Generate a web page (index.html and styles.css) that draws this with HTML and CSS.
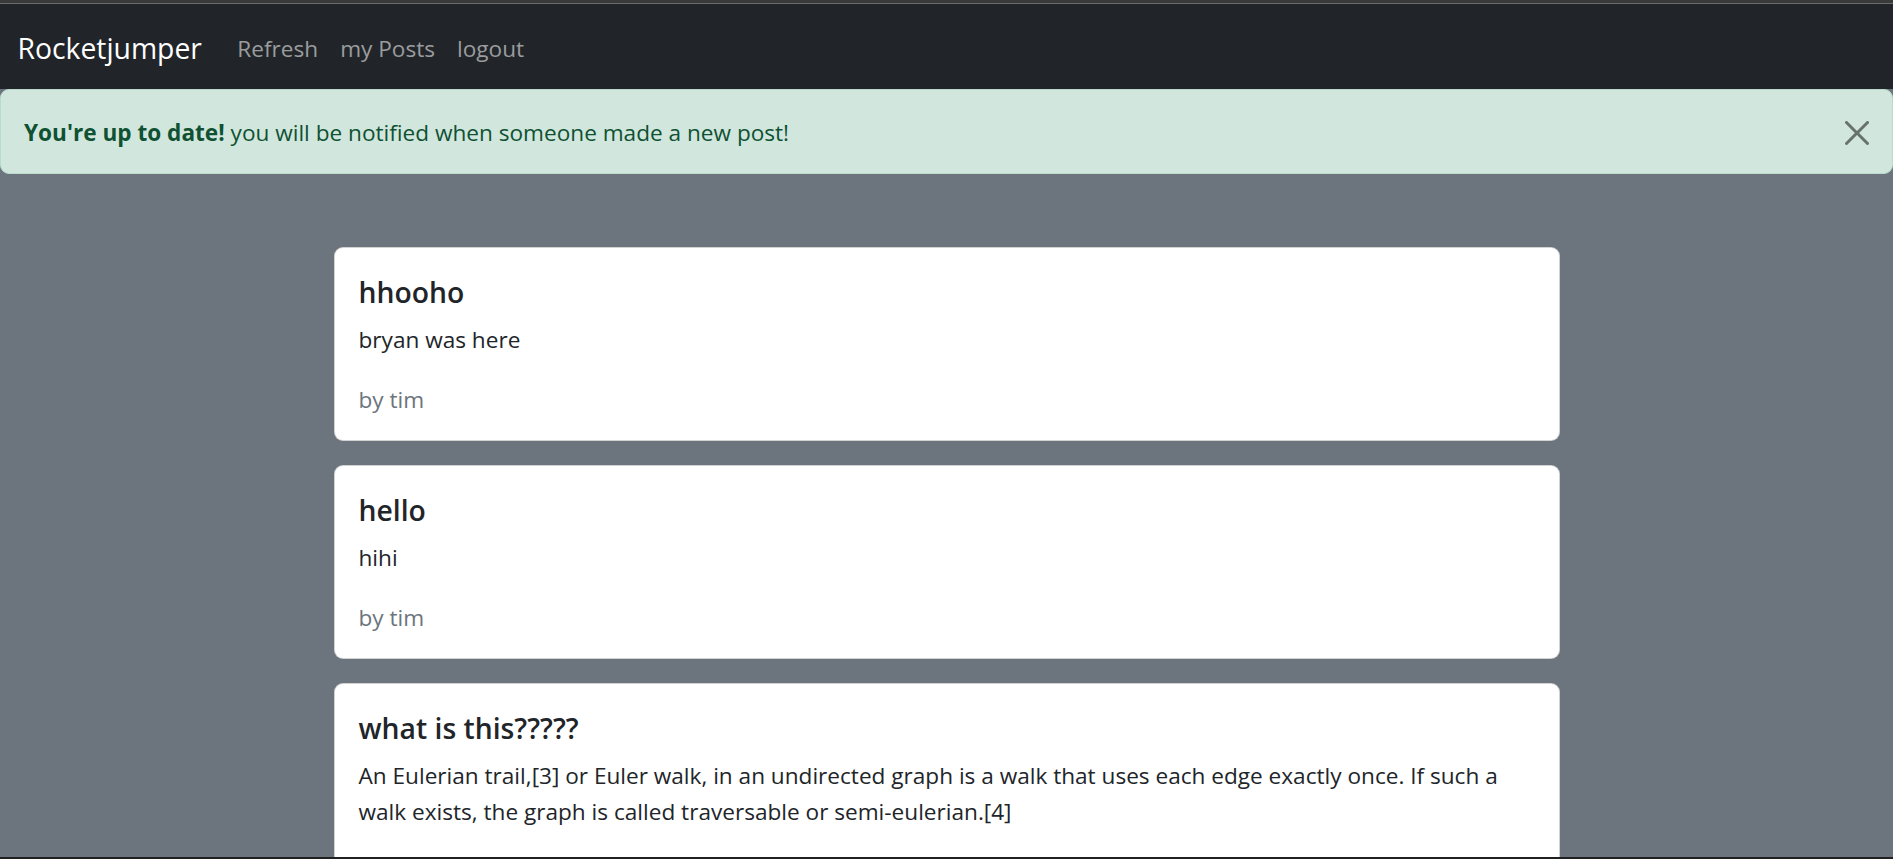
FILE: index.html
```html
<!DOCTYPE html>
<html lang="en">
<head>
<meta charset="utf-8">
<title>Rocketjumper</title>
<link rel="stylesheet" href="styles.css">
</head>
<body>
<div class="frame-top"></div>
<nav class="navbar">
  <a class="brand" href="#">Rocketjumper</a>
  <ul class="nav">
    <li><a class="nav-link" href="#">Refresh</a></li>
    <li><a class="nav-link" href="#">my Posts</a></li>
    <li><a class="nav-link" href="#">logout</a></li>
  </ul>
</nav>
<div class="alert">
  <span class="alert-text"><strong>You're up to date!</strong> you will be notified when someone made a new post!</span>
  <button class="btn-close" type="button" aria-label="Close">
    <svg viewBox="0 0 16 16" width="24" height="24"><path d="M.293.293a1 1 0 0 1 1.414 0L8 6.586 14.293.293a1 1 0 1 1 1.414 1.414L9.414 8l6.293 6.293a1 1 0 0 1-1.414 1.414L8 9.414l-6.293 6.293a1 1 0 0 1-1.414-1.414L6.586 8 .293 1.707a1 1 0 0 1 0-1.414z"/></svg>
  </button>
</div>
<main class="posts">
  <div class="card">
    <h5 class="card-title">hhooho</h5>
    <p class="card-text">bryan was here</p>
    <p class="author">by tim</p>
  </div>
  <div class="card">
    <h5 class="card-title">hello</h5>
    <p class="card-text">hihi</p>
    <p class="author">by tim</p>
  </div>
  <div class="card">
    <h5 class="card-title">what is this?????</h5>
    <p class="card-text">An Eulerian trail,[3] or Euler walk, in an undirected graph is a walk that uses each edge exactly once. If such a walk exists, the graph is called traversable or semi-eulerian.[4]</p>
    <p class="author">by tim</p>
  </div>
</main>
<div class="frame-bottom"></div>
</body>
</html>
```
FILE: styles.css
```css
* { box-sizing: border-box; }
body {
  margin: 0;
  background: #6c757d;
  font-family: "Open Sans", "Noto Sans", sans-serif;
  font-size: 22.6px;
  line-height: 36px;
  color: #212529;
}
.frame-top {
  height: 4px;
  background: #3a3a3a;
  border-bottom: 1px solid #6a6a6a;
}
.navbar {
  height: 85px;
  background: #212529;
  display: flex;
  align-items: center;
  padding: 3px 15px 0 17.5px;
}
.brand {
  color: #fff;
  text-decoration: none;
  font-size: 28.3px;
  line-height: 45px;
  margin-right: 24.5px;
}
.nav {
  list-style: none;
  margin: 0;
  padding: 0;
  display: flex;
  padding-top: 1px;
}
.nav-link {
  display: block;
  padding: 0 11px;
  color: #9a9c9e;
  text-decoration: none;
  font-size: 22.6px;
  line-height: 36px;
}
.alert {
  position: relative;
  height: 85px;
  display: flex;
  align-items: center;
  padding: 2px 72px 0 23px;
  background: #d1e7dd;
  border: 1px solid #badbcc;
  border-radius: 9px;
  color: #0f5132;
}
.alert strong { font-weight: 700; }
.btn-close {
  position: absolute;
  top: 0;
  right: 0;
  width: 72px;
  height: 85px;
  border: 0;
  background: transparent;
  padding: 0;
  display: flex;
  align-items: center;
  justify-content: center;
  cursor: pointer;
}
.btn-close svg { fill: #000; opacity: .5; display: block; margin-left: 2px; margin-top: 1px; }
.posts {
  width: 1226px;
  margin: 73px auto 0;
  display: flex;
  flex-direction: column;
  gap: 24px;
}
.card {
  background: #fff;
  border: 1px solid rgba(0,0,0,.175);
  border-radius: 9px;
  padding: 26px 24px 22px;
}
.card-title {
  margin: 0 0 12px;
  font-size: 28.3px;
  line-height: 36px;
  font-weight: 600;
}
.card-text { margin: 0 0 24px; }
.author { margin: 0; color: #6c757d; }
.frame-bottom {
  position: fixed;
  left: 0;
  right: 0;
  bottom: 0;
  height: 2px;
  background: #202020;
}
```
